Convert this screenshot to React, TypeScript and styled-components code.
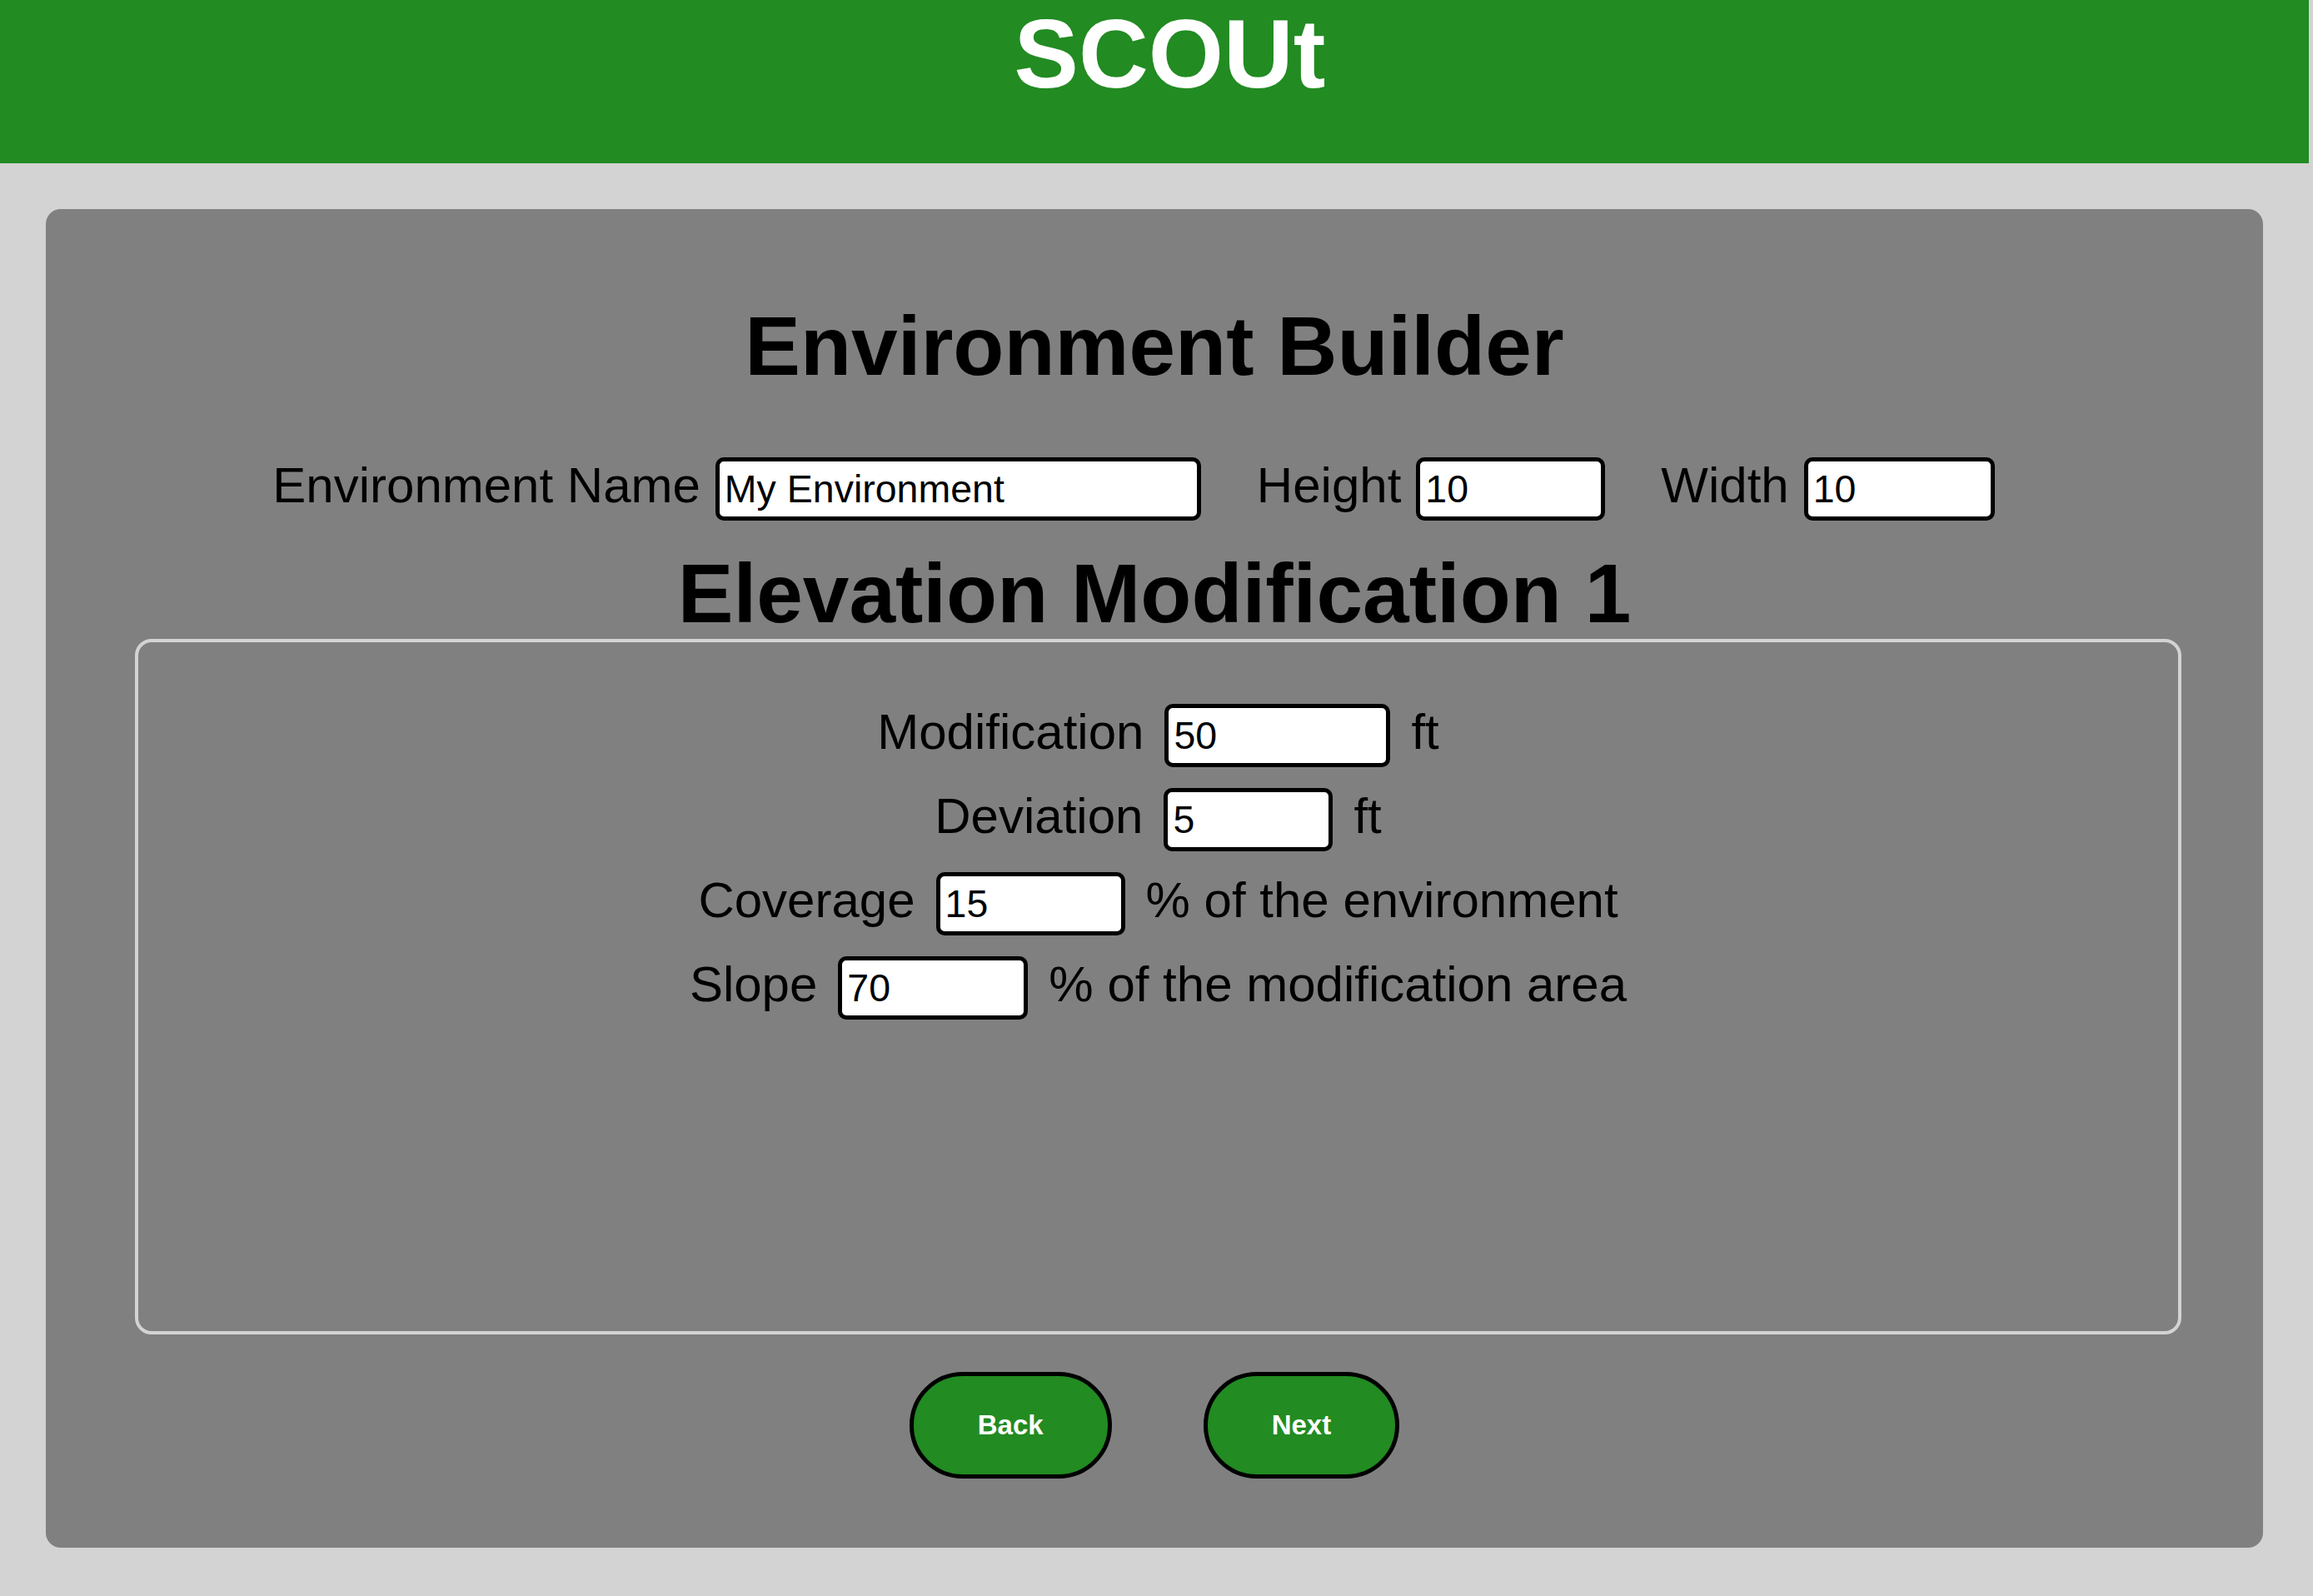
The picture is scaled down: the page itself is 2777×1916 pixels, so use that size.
import React from "react";
import styled, { createGlobalStyle } from "styled-components";

const GlobalStyle = createGlobalStyle`
  html, body {
    margin: 0;
    padding: 0;
    background: #d3d3d3;
  }
  body {
    font-family: "Liberation Sans", Arial, sans-serif;
    color: #000;
  }
  * {
    box-sizing: border-box;
  }
`;

const Page = styled.div`
  margin-right: 5px;
  padding-bottom: 55px;
`;

const Header = styled.header`
  height: 196px;
  background: #228b22;
  display: flex;
  justify-content: center;
  padding-left: 37px;
`;

const Brand = styled.h1`
  margin: 0;
  font-size: 116px;
  line-height: 131px;
  font-weight: 700;
  color: #fff;
`;

const Card = styled.main`
  margin: 55px 55px 0;
  background: #808080;
  border-radius: 18px;
  padding: 109px 0 83px;
  display: flex;
  flex-direction: column;
`;

const Title = styled.h2<{ $mt?: number }>`
  margin: ${(p) => p.$mt ?? 0}px 0 0;
  font-size: 100px;
  line-height: 110px;
  font-weight: 700;
  text-align: center;
  color: #000;
`;

const FieldRow = styled.div`
  display: flex;
  justify-content: center;
  align-items: baseline;
  height: 78px;
  margin-top: 78px;
  gap: 17px;
`;

const Field = styled.label`
  display: flex;
  align-items: baseline;
  gap: 18px;
`;

const LabelText = styled.span`
  font-size: 60px;
  line-height: normal;
  white-space: nowrap;
`;

const TextInput = styled.input<{ $w: number; $mr?: number }>`
  width: ${(p) => p.$w}px;
  height: 76px;
  margin: 0 ${(p) => p.$mr ?? 0}px 0 0;
  border: 5px solid #000;
  border-radius: 10px;
  padding: 0 4px 0 6px;
  background: #fff;
  color: #000;
  font-family: "Liberation Sans", Arial, sans-serif;
  font-size: 46.5px;
  outline: none;
`;

const ModBox = styled.section`
  margin: 0 98px 0 107px;
  height: 835px;
  border: 4px solid #d3d3d3;
  border-radius: 20px;
  padding-top: 73px;
  display: flex;
  flex-direction: column;
  gap: 23px;
`;

const ModRow = styled.label`
  display: flex;
  justify-content: center;
  align-items: baseline;
  height: 78px;
  gap: 25px;
`;

const ButtonBar = styled.div`
  display: flex;
  justify-content: center;
  gap: 110px;
  margin-top: 45px;
`;

const NavButton = styled.button`
  height: 128px;
  padding: 0 77px;
  border: 5px solid #000;
  border-radius: 64px;
  background: #228b22;
  color: #fff;
  font-family: "Liberation Sans", Arial, sans-serif;
  font-weight: 700;
  font-size: 33px;
  cursor: pointer;
`;

const topFields = [
  { label: "Environment Name", value: "My Environment", w: 583 },
  { label: "Height", value: "10", w: 227 },
  { label: "Width", value: "10", w: 229 },
];

const modFields = [
  { label: "Modification", value: "50", w: 271, suffix: "ft" },
  { label: "Deviation", value: "5", w: 203, suffix: "ft" },
  { label: "Coverage", value: "15", w: 227, suffix: "% of the environment" },
  { label: "Slope", value: "70", w: 228, suffix: "% of the modification area" },
];

export default function App() {
  return (
    <Page>
      <GlobalStyle />
      <Header>
        <Brand>SCOUt</Brand>
      </Header>
      <Card>
        <Title>Environment Builder</Title>
        <FieldRow>
          {topFields.map((f) => (
            <Field key={f.label}>
              <LabelText>{f.label}</LabelText>
              <TextInput type="text" defaultValue={f.value} $w={f.w} $mr={50} />
            </Field>
          ))}
        </FieldRow>
        <Title $mt={31}>Elevation Modification 1</Title>
        <ModBox>
          {modFields.map((f) => (
            <ModRow key={f.label}>
              <LabelText>{f.label}</LabelText>
              <TextInput type="text" defaultValue={f.value} $w={f.w} />
              <LabelText>{f.suffix}</LabelText>
            </ModRow>
          ))}
        </ModBox>
        <ButtonBar>
          <NavButton type="button">Back</NavButton>
          <NavButton type="button">Next</NavButton>
        </ButtonBar>
      </Card>
    </Page>
  );
}
